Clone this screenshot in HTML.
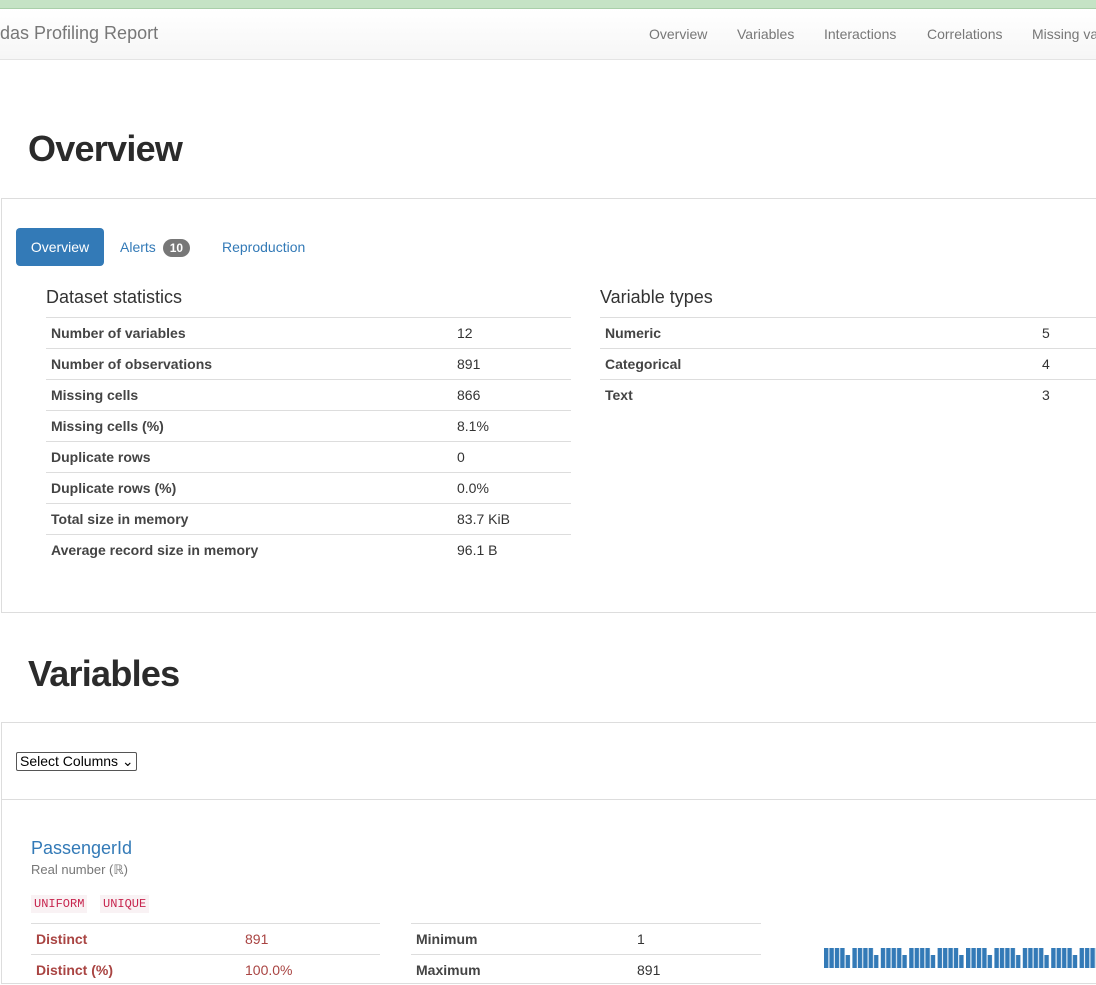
<!DOCTYPE html>
<html><head><meta charset="utf-8"><style>
body{margin:0;width:1096px;height:968px;overflow:hidden;background:#fff;font-family:"Liberation Sans",Arial,sans-serif;color:#333;position:relative}
.a{position:absolute;white-space:nowrap}
.top{position:absolute;left:0;top:0;width:1096px;height:8px;background:#c5e3c5;border-bottom:1px solid #a9cfa9}
.nav{position:absolute;left:0;top:9px;width:1096px;height:50px;background:linear-gradient(#fff,#f6f6f6);border-bottom:1px solid #e4e4e4}
.nav .a{color:#777;font-size:14px;top:17px}
h1{position:absolute;margin:0;font-size:36px;font-weight:bold;color:#2b2b2b;left:28px;letter-spacing:-0.75px}
.box{position:absolute;left:1px;width:1100px;border:1px solid #ddd;border-right:none}
.row{position:absolute;height:30px;border-top:1px solid #ddd;font-size:14px}
.row b{position:absolute;left:5px;top:7px;color:#444}
.row span{position:absolute;top:7px;color:#333}
.tag{position:absolute;top:895px;font-family:"Liberation Mono",monospace;font-size:12px;color:#c7254e;background:#f9f2f4;padding:2px 3px}
</style></head><body>
<div class="top"></div>
<div class="nav">
<div class="a" style="left:0;top:14px;font-size:18px;color:#777">das Profiling Report</div>
<div class="a" style="left:649px">Overview</div>
<div class="a" style="left:737px">Variables</div>
<div class="a" style="left:824px">Interactions</div>
<div class="a" style="left:927px">Correlations</div>
<div class="a" style="left:1032px">Missing values</div>
</div>
<h1 style="top:128px">Overview</h1>
<div class="box" style="top:198px;height:413px"></div>
<div class="a" style="left:16px;top:228px;width:88px;height:38px;background:#337ab7;border-radius:4px;color:#fff;font-size:14px;line-height:38px;text-align:center">Overview</div>
<div class="a" style="left:120px;top:239px;font-size:14px;color:#337ab7">Alerts <span style="display:inline-block;background:#777;color:#fff;font-size:12px;font-weight:bold;border-radius:10px;padding:2px 7px;margin-left:3px">10</span></div>
<div class="a" style="left:222px;top:239px;font-size:14px;color:#337ab7">Reproduction</div>
<div class="a" style="left:46px;top:287px;font-size:18px;color:#333">Dataset statistics</div>
<div class="a" style="left:600px;top:287px;font-size:18px;color:#333">Variable types</div>
<div class="row" style="left:46px;top:317px;width:525px"><b>Number of variables</b><span style="left:411px">12</span></div>
<div class="row" style="left:46px;top:348px;width:525px"><b>Number of observations</b><span style="left:411px">891</span></div>
<div class="row" style="left:46px;top:379px;width:525px"><b>Missing cells</b><span style="left:411px">866</span></div>
<div class="row" style="left:46px;top:410px;width:525px"><b>Missing cells (%)</b><span style="left:411px">8.1%</span></div>
<div class="row" style="left:46px;top:441px;width:525px"><b>Duplicate rows</b><span style="left:411px">0</span></div>
<div class="row" style="left:46px;top:472px;width:525px"><b>Duplicate rows (%)</b><span style="left:411px">0.0%</span></div>
<div class="row" style="left:46px;top:503px;width:525px"><b>Total size in memory</b><span style="left:411px">83.7 KiB</span></div>
<div class="row" style="left:46px;top:534px;width:525px"><b>Average record size in memory</b><span style="left:411px">96.1 B</span></div>
<div class="row" style="left:600px;top:317px;width:500px"><b>Numeric</b><span style="left:442px">5</span></div>
<div class="row" style="left:600px;top:348px;width:500px"><b>Categorical</b><span style="left:442px">4</span></div>
<div class="row" style="left:600px;top:379px;width:500px"><b>Text</b><span style="left:442px">3</span></div>
<h1 style="top:653px">Variables</h1>
<div class="box" style="top:722px;height:260px"></div>
<div class="a" style="left:1px;top:799px;width:1100px;border-top:1px solid #ddd"></div>
<div class="a" style="left:16px;top:752px;width:116px;height:17px;border:1px solid #555;border-radius:2px;font-size:14px;line-height:17px;padding-left:3px;box-sizing:content-box;color:#000">Select Columns ⌄</div>
<div class="a" style="left:31px;top:838px;font-size:18px;color:#337ab7">PassengerId</div>
<div class="a" style="left:31px;top:862px;font-size:13px;color:#777">Real number (ℝ)</div>
<div class="tag" style="left:31px">UNIFORM</div>
<div class="tag" style="left:100px">UNIQUE</div>
<div class="row" style="left:31px;top:923px;width:349px"><b style="color:#a94442">Distinct</b><span style="left:214px;color:#a94442">891</span></div>
<div class="row" style="left:31px;top:954px;width:349px"><b style="color:#a94442">Distinct (%)</b><span style="left:214px;color:#a94442">100.0%</span></div>
<div class="row" style="left:411px;top:923px;width:350px"><b>Minimum</b><span style="left:226px">1</span></div>
<div class="row" style="left:411px;top:954px;width:350px"><b>Maximum</b><span style="left:226px">891</span></div>
<svg class="a" style="left:824px;top:946px" width="272" height="22"><defs><pattern id="p" width="28.4" height="22" patternUnits="userSpaceOnUse"><rect x="0" y="2" width="4.4" height="20" fill="#337ab7"/><rect x="5.4" y="2" width="4.4" height="20" fill="#337ab7"/><rect x="10.8" y="2" width="4.4" height="20" fill="#337ab7"/><rect x="16.2" y="2" width="4.4" height="20" fill="#337ab7"/><rect x="21.6" y="9" width="4.4" height="13" fill="#337ab7"/></pattern></defs><rect width="272" height="22" fill="url(#p)"/></svg>
</body></html>
